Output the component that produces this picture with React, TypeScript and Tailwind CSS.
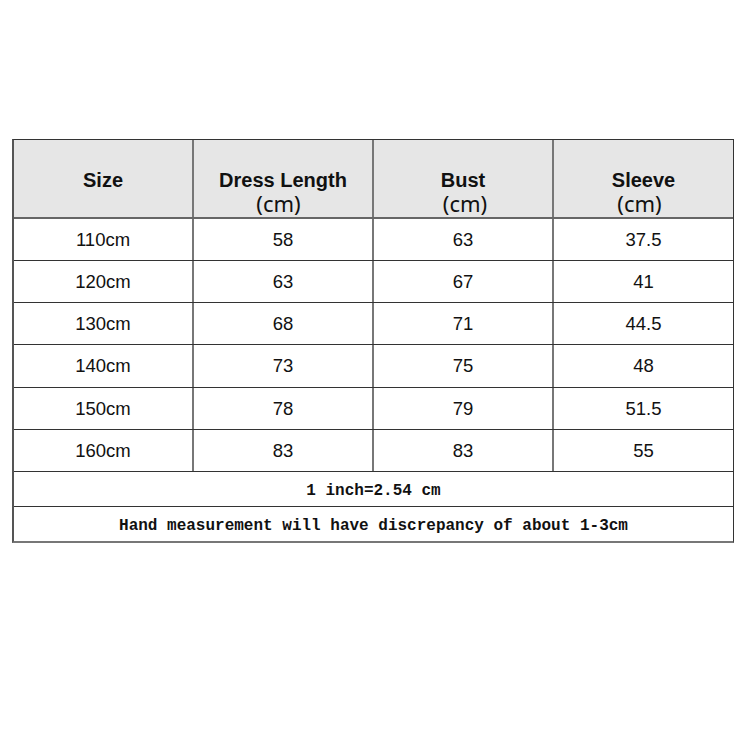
const rows = [
  ["110cm", "58", "63", "37.5"],
  ["120cm", "63", "67", "41"],
  ["130cm", "68", "71", "44.5"],
  ["140cm", "73", "75", "48"],
  ["150cm", "78", "79", "51.5"],
  ["160cm", "83", "83", "55"],
];

const rowHeights = ["h-[42px]", "h-[42px]", "h-[42px]", "h-[43px]", "h-[42px]", "h-[42px]"];

const cellW = ["w-[180px]", "w-[180px]", "w-[180px]", "w-[179px]"];

export default function App() {
  return (
    <div className="w-[750px] h-[750px] bg-white pt-[139px] pl-[12px] text-[#111]">
      <div className="w-[722px] border-t border-t-[#333] border-l-2 border-l-[#555] border-r border-r-[#333] border-b-2 border-b-[#777]">
        {/* header */}
        <div className="flex h-[79px] bg-[#e6e6e6] border-b-2 border-b-[#666]">
          <div className="w-[180px] border-r-2 border-r-[#777] flex flex-col items-center pt-[29px]">
            <span className="font-['Liberation_Sans',Arial,sans-serif] font-bold text-[20px] leading-[22px]">Size</span>
          </div>
          <div className="w-[180px] border-r-2 border-r-[#777] flex flex-col items-center pt-[29px]">
            <span className="font-['Liberation_Sans',Arial,sans-serif] font-bold text-[20px] leading-[22px]">Dress Length</span>
            <span className="font-['Noto_Sans',sans-serif] text-[22px] leading-[22px] mt-[1px] pr-[9px]">(cm)</span>
          </div>
          <div className="w-[180px] border-r-2 border-r-[#777] flex flex-col items-center pt-[29px]">
            <span className="font-['Liberation_Sans',Arial,sans-serif] font-bold text-[20px] leading-[22px]">Bust</span>
            <span className="font-['Noto_Sans',sans-serif] text-[22px] leading-[22px] mt-[1px] pl-[4px]">(cm)</span>
          </div>
          <div className="w-[179px] flex flex-col items-center pt-[29px]">
            <span className="font-['Liberation_Sans',Arial,sans-serif] font-bold text-[20px] leading-[22px]">Sleeve</span>
            <span className="font-['Noto_Sans',sans-serif] text-[22px] leading-[22px] mt-[1px] pr-[8px]">(cm)</span>
          </div>
        </div>

        {/* body */}
        {rows.map((r, i) => (
          <div key={i} className={`flex ${rowHeights[i]} border-b border-b-[#333]`}>
            {r.map((v, j) => (
              <div
                key={j}
                className={`${cellW[j]} ${j < 3 ? "border-r-2 border-r-[#777]" : ""} flex items-center justify-center font-['Liberation_Sans',Arial,sans-serif] text-[18.5px]`}
              >
                {v}
              </div>
            ))}
          </div>
        ))}

        {/* notes */}
        <div className="h-[35px] border-b border-b-[#333] flex items-center justify-center pt-[3px] font-['Liberation_Mono','Courier_New',monospace] font-bold text-[16px]">
          1 inch=2.54 cm
        </div>
        <div className="h-[34px] flex items-center justify-center pt-[3px] font-['Liberation_Mono','Courier_New',monospace] font-bold text-[16px]">
          Hand measurement will have discrepancy of about 1-3cm
        </div>
      </div>
    </div>
  );
}
